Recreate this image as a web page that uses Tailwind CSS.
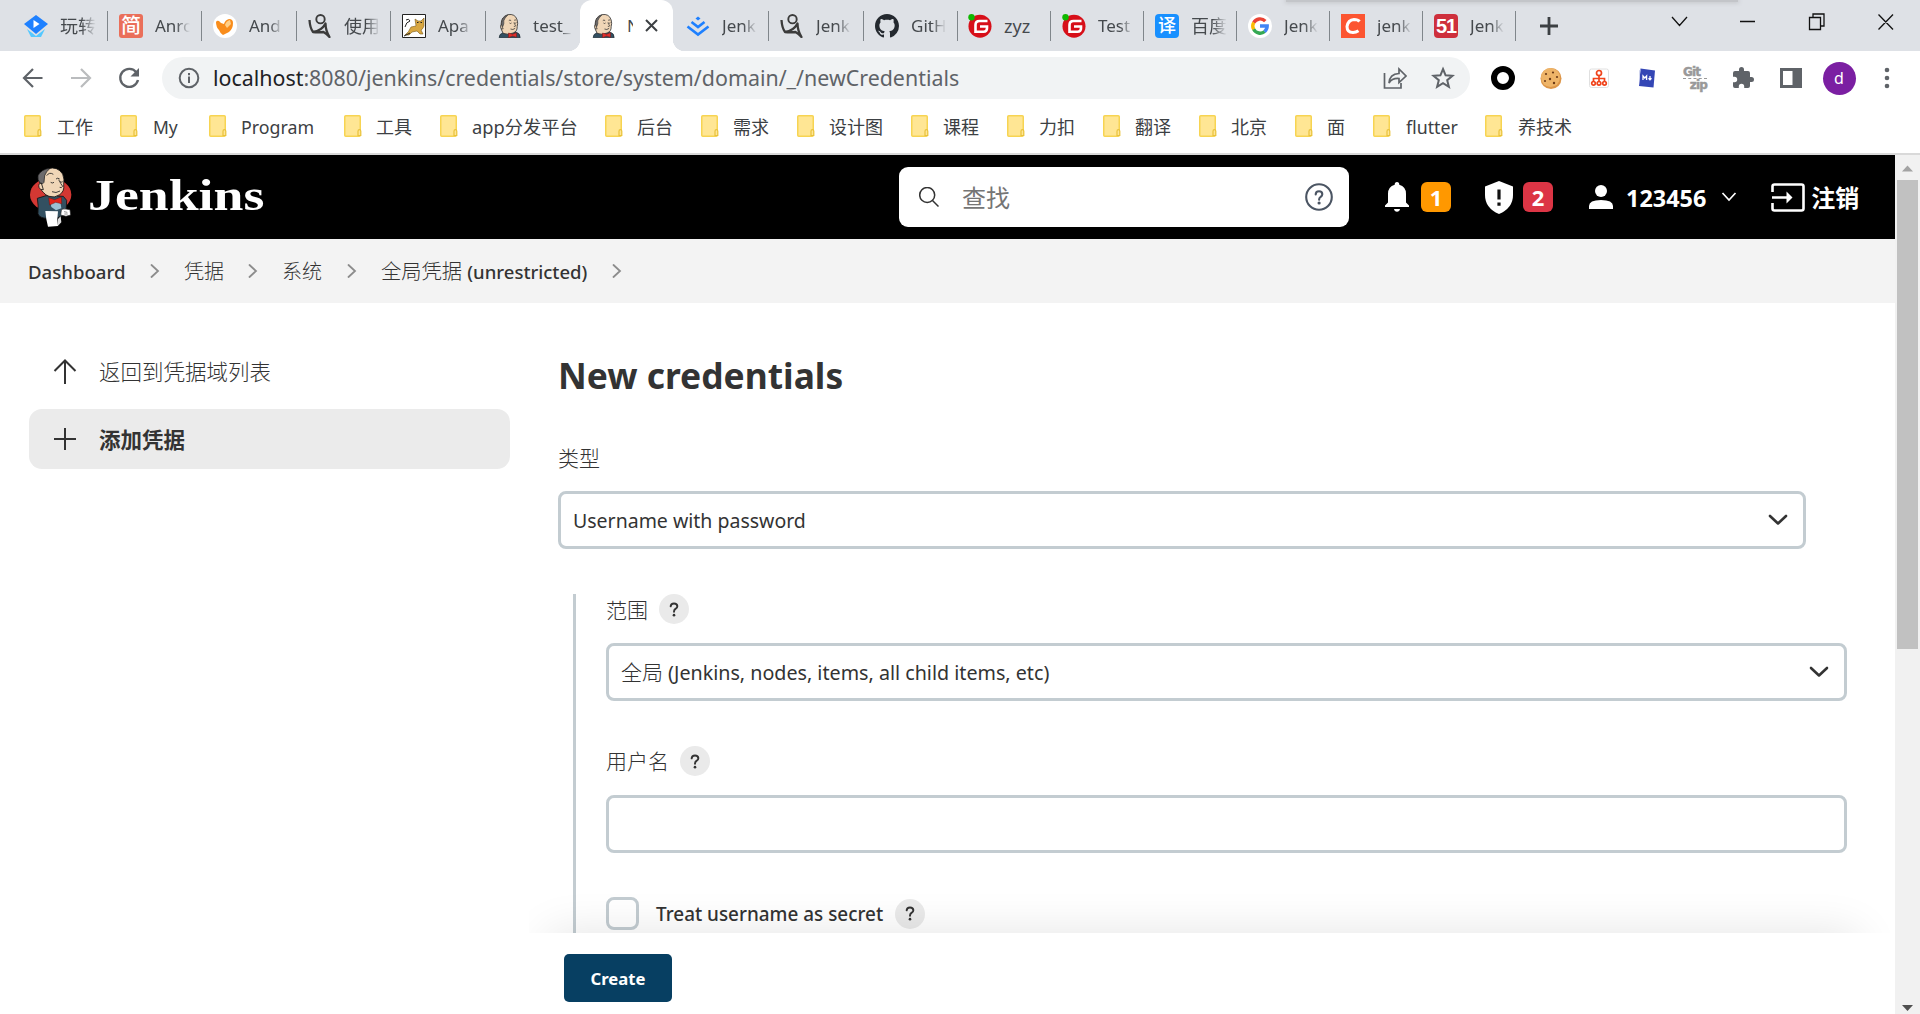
<!DOCTYPE html>
<html lang="zh-CN">
<head>
<meta charset="utf-8">
<title>New credentials [Jenkins]</title>
<script src="https://cdn.jsdelivr.net/npm/@tailwindcss/browser@4"></script>
</head>
<body class="w-[1920px] h-[1014px] overflow-hidden bg-white text-[#333] font-['Noto_Sans','Noto_Sans_CJK_SC',sans-serif]">
<svg class="hidden">
  <defs>
    <symbol id="folder" viewBox="0 0 18 22"><rect x=".75" y=".75" width="15.5" height="20.5" rx="1" fill="#ffe694" stroke="#f7d452" stroke-width="1.5"/><path d="M14 20.5v-4.2q0-1.6 1.4-1.6t1.4 1.6v4.2z" fill="#ffe694" stroke="#e9c23c" stroke-width="1.2"/></symbol>
    <symbol id="butler" viewBox="0 0 66 72"><path d="M2 71q0-11 10-14l18-3 24 1q11 3 11 16z" fill="#335061" stroke="#1c2830" stroke-width="2"/><path d="M14 58Q4 44 8 30 8 8 28 2q22-4 28 16 3 10 0 20 1 14-12 19-16 7-30 1z" fill="#f0d6b7" stroke="#2b2b2b" stroke-width="2.4"/><path d="M9 38Q6 10 28 3l-8 9q-6 8-4 17l-3 9z" fill="#6d6b6d" stroke="#2b2b2b" stroke-width="1.5"/><path d="M9 32q-5 2-2 9 2 5 7 4z" fill="#f0d6b7" stroke="#2b2b2b" stroke-width="2"/><path d="M31 20q3-4 7 0M47 19q3-3 6 0M33 27q3 3 6 0M48 26q3 3 6 0M46 26q3 6 6 9-2 3-6 2M36 45q7 4 14-2" fill="none" stroke="#2b2b2b" stroke-width="2.2"/><path d="M30 57l12 4 12-5v14l-12-4-12 5z" fill="#e0302c" stroke="#7a1714" stroke-width="1.5"/></symbol>
    <symbol id="figure" viewBox="0 0 24 24"><circle cx="12.5" cy="5.2" r="4.2" fill="none" stroke="#3b3b3b" stroke-width="1.9"/><path d="M1.500 6q.5 8 3.500 12 8.500-1 12.500-8.500 0 7 4 13.500-2.500-3-6-5-5.500.5-10.500 0" fill="none" stroke="#3b3b3b" stroke-width="2.300" stroke-linejoin="round"/></symbol>
    <symbol id="gitee" viewBox="0 0 24 24"><circle cx="12" cy="12.200" r="11.500" fill="#d70f19"/><path d="M19.500 7h-8q-4 0-4 4v6.800h8q3.500 0 3.500-3.500v-1.800h-7" fill="none" stroke="#fff" stroke-width="2.600"/><circle cx="3.500" cy="3.200" r="3.200" fill="#0fb800"/></symbol>
    <symbol id="crumb" viewBox="0 0 10 14"><path d="M1.500 1l6.500 6-6.500 6" fill="none" stroke="#8c8c8c" stroke-width="1.800" stroke-linecap="round"/></symbol>
    <symbol id="down" viewBox="0 0 20 12"><path d="M2 2l8 7.500L18 2" fill="none" stroke="#333" stroke-width="2.600" stroke-linecap="round" stroke-linejoin="round"/></symbol>
    <symbol id="help" viewBox="0 0 12 18"><path d="M2 5.200Q2.200 1.700 6 1.700T10 5Q10 7 7.800 8.300 6 9.500 6 11.600" fill="none" stroke="#333" stroke-width="2.300" stroke-linecap="round"/><circle cx="6" cy="15.800" r="1.600" fill="#333"/></symbol>
  </defs>
</svg>

<!-- Tab strip -->
<div class="relative h-[51px] bg-[#dee1e6] flex pl-[13px] text-[17px] text-[#45494d] whitespace-nowrap">
  <div class="w-[95px] flex pl-[11px] pt-[14px] gap-3 relative"><svg class="size-6 shrink-0" viewBox="0 0 24 24"><path d="M3 15l9 7 9-7-4 8H7z" fill="#54c8ff"/><path d="M12 1l12 9-12 10L0 10z" fill="#1e80ff"/><path d="M9.500 6l6 4-6 4z" fill="#fff"/></svg><span class="w-9 overflow-hidden leading-6 text-[18px] [mask-image:linear-gradient(to_right,#000_60%,transparent)]">玩转</span><i class="absolute right-0 top-[11px] h-[30px] w-[1.5px] bg-[#80868b]"></i></div>
  <div class="w-[94px] flex pl-[11px] pt-[14px] gap-3 relative"><span class="size-6 shrink-0 rounded-[3px] bg-[#ea6f5a] text-white text-[20px] leading-[23px] text-center font-medium">简</span><span class="w-[35px] overflow-hidden leading-6 [mask-image:linear-gradient(to_right,#000_60%,transparent)]">Anro</span><i class="absolute right-0 top-[11px] h-[30px] w-[1.5px] bg-[#80868b]"></i></div>
  <div class="w-[95px] flex pl-[11px] pt-[14px] gap-3 relative"><svg class="size-6 shrink-0" viewBox="0 0 24 24"><circle cx="12" cy="12" r="12" fill="#fff"/><path d="M3 8q1-2 3-1 2 3 5 3 1-4 5-5 4 0 4 4 0 6-4 9l-6 3q-3-2-4-5-3-3-3-8z" fill="#f98d1c"/><path d="M12 11q1-4 5-5l1 4-4 4z" fill="#ffd08a"/></svg><span class="w-[34px] overflow-hidden leading-6 [mask-image:linear-gradient(to_right,#000_60%,transparent)]">And</span><i class="absolute right-0 top-[11px] h-[30px] w-[1.5px] bg-[#80868b]"></i></div>
  <div class="w-[94px] flex pl-[11px] pt-[14px] gap-3 relative"><svg class="size-6 shrink-0"><use href="#figure"/></svg><span class="w-9 overflow-hidden leading-6 text-[18px] [mask-image:linear-gradient(to_right,#000_60%,transparent)]">使用</span><i class="absolute right-0 top-[11px] h-[30px] w-[1.5px] bg-[#80868b]"></i></div>
  <div class="w-[95px] flex pl-[11px] pt-[14px] gap-3 relative"><svg class="size-6 shrink-0" viewBox="0 0 24 24"><path d="M.5.5h23v23H.5z" fill="#fff" stroke="#222"/><path d="M3 21q4-3 6-8l5-1-1-7 3 2 3 0 3-3v8q-1 3-3 4l2 4h-3l-3-3-5 1-3 3z" fill="#d9a741" stroke="#7b5a1b" stroke-width=".6"/><path d="M4 6q3-2 4 1-4 1-5 6M15 8.500h1.500M18.500 8.500H20M2 22l6-3" stroke="#222" fill="none"/></svg><span class="w-[34px] overflow-hidden leading-6 [mask-image:linear-gradient(to_right,#000_60%,transparent)]">Apa</span><i class="absolute right-0 top-[11px] h-[30px] w-[1.5px] bg-[#80868b]"></i></div>
  <div class="w-[94px] flex pl-[12px] pt-[14px] gap-3 relative"><svg class="w-[23px] h-6 shrink-0"><use href="#butler"/></svg><span class="w-10 overflow-hidden leading-6 [mask-image:linear-gradient(to_right,#000_70%,transparent)]">test_</span></div>
  <div class="w-[93px] flex pl-[12px] pt-[14px] gap-3 relative bg-white rounded-t-[12px] before:absolute before:bottom-0 before:-left-3 before:size-3 before:bg-[radial-gradient(circle_at_0_0,transparent_12px,#fff_12.500px)] after:absolute after:bottom-0 after:-right-3 after:size-3 after:bg-[radial-gradient(circle_at_100%_0,transparent_12px,#fff_12.500px)]"><svg class="w-[23px] h-6 shrink-0"><use href="#butler"/></svg><span class="w-[6px] overflow-hidden leading-6">N</span><svg class="w-[13px] h-[13px] mt-[5px]" viewBox="0 0 13 13"><path d="M1 1l11 11M12 1L1 12" stroke="#3c4043" stroke-width="2"/></svg></div>
  <div class="w-[96px] flex pl-[13px] pt-[14px] gap-3 relative"><svg class="size-6 shrink-0" viewBox="0 0 24 24"><path d="M12 2.500l2.500 2-2.500 2-2.500-2z" fill="#1e80ff"/><path d="M5.500 8L12 13l6.500-5M1.500 12.500L12 20.500l10.500-8" fill="none" stroke="#1e80ff" stroke-width="2.600"/></svg><span class="w-[35px] overflow-hidden leading-6 [mask-image:linear-gradient(to_right,#000_60%,transparent)]">Jenk</span><i class="absolute right-0 top-[11px] h-[30px] w-[1.5px] bg-[#80868b]"></i></div>
  <div class="w-[95px] flex pl-[11px] pt-[14px] gap-3 relative"><svg class="size-6 shrink-0"><use href="#figure"/></svg><span class="w-[35px] overflow-hidden leading-6 [mask-image:linear-gradient(to_right,#000_60%,transparent)]">Jenk</span><i class="absolute right-0 top-[11px] h-[30px] w-[1.5px] bg-[#80868b]"></i></div>
  <div class="w-[94px] flex pl-[11px] pt-[14px] gap-3 relative"><svg class="size-6 shrink-0" viewBox="0 0 16 16"><path fill="#24292f" d="M8 0C3.580 0 0 3.580 0 8c0 3.540 2.290 6.530 5.470 7.590.4.070.55-.17.55-.38 0-.19-.01-.82-.01-1.490-2.010.37-2.530-.49-2.690-.94-.09-.23-.48-.94-.82-1.130-.28-.15-.68-.52-.01-.53.63-.01 1.080.58 1.230.82.72 1.210 1.870.87 2.330.66.07-.52.28-.87.51-1.070-1.780-.2-3.640-.89-3.640-3.950 0-.87.31-1.590.82-2.150-.08-.2-.36-1.020.08-2.120 0 0 .67-.21 2.200.82.64-.18 1.320-.27 2-.27s1.360.09 2 .27c1.530-1.040 2.200-.82 2.200-.82.44 1.100.16 1.920.08 2.120.51.56.82 1.270.82 2.150 0 3.070-1.870 3.750-3.650 3.950.29.25.54.73.54 1.480 0 1.070-.01 1.930-.01 2.200 0 .21.15.46.55.38A8.010 8.010 0 0016 8c0-4.420-3.580-8-8-8z"/></svg><span class="w-[35px] overflow-hidden leading-6 [mask-image:linear-gradient(to_right,#000_60%,transparent)]">GitH</span><i class="absolute right-0 top-[11px] h-[30px] w-[1.5px] bg-[#80868b]"></i></div>
  <div class="w-[93px] flex pl-[10px] pt-[14px] gap-3 relative"><svg class="size-6 shrink-0"><use href="#gitee"/></svg><span class="w-9 overflow-hidden leading-6 text-[18px]">zyz</span><i class="absolute right-0 top-[11px] h-[30px] w-[1.5px] bg-[#80868b]"></i></div>
  <div class="w-[93px] flex pl-[11px] pt-[14px] gap-3 relative"><svg class="size-6 shrink-0"><use href="#gitee"/></svg><span class="w-9 overflow-hidden leading-6 [mask-image:linear-gradient(to_right,#000_60%,transparent)]">Test</span><i class="absolute right-0 top-[11px] h-[30px] w-[1.5px] bg-[#80868b]"></i></div>
  <div class="w-[93px] flex pl-[11px] pt-[14px] gap-3 relative"><span class="size-6 shrink-0 rounded-[4px] bg-[#1890ff] text-white text-[18px] leading-[23px] text-center font-medium">译</span><span class="w-9 overflow-hidden leading-6 text-[18px] [mask-image:linear-gradient(to_right,#000_60%,transparent)]">百度</span><i class="absolute right-0 top-[11px] h-[30px] w-[1.5px] bg-[#80868b]"></i></div>
  <div class="w-[93px] flex pl-[11px] pt-[14px] gap-3 relative"><svg class="size-6 shrink-0" viewBox="0 0 24 24"><circle cx="12" cy="12" r="12" fill="#fff"/><g fill="none" stroke-width="3.400"><path d="M17.300 7.200A7.200 7.200 0 0 0 5.700 8.700" stroke="#ea4335"/><path d="M5.700 8.500A7.200 7.200 0 0 0 5.700 15.500" stroke="#fbbc05"/><path d="M5.700 15.300A7.200 7.200 0 0 0 16.700 17.500" stroke="#34a853"/><path d="M16.500 17.600A7.200 7.200 0 0 0 19.200 12H12" stroke="#4285f4"/></g></svg><span class="w-[34px] overflow-hidden leading-6 [mask-image:linear-gradient(to_right,#000_60%,transparent)]">Jenk</span><i class="absolute right-0 top-[11px] h-[30px] w-[1.5px] bg-[#80868b]"></i></div>
  <div class="w-[93px] flex pl-[11px] pt-[14px] gap-3 relative"><svg class="size-6 shrink-0" viewBox="0 0 24 24"><path d="M0 0h24v24H0z" fill="#fc5531"/><path d="M18.500 7.500Q17 5.500 13 5.500 7 6 6 12.500 6 18.500 12 18.500q3 0 5.500-1.700" fill="none" stroke="#fff" stroke-width="3"/></svg><span class="w-[35px] overflow-hidden leading-6 [mask-image:linear-gradient(to_right,#000_60%,transparent)]">jenk</span><i class="absolute right-0 top-[11px] h-[30px] w-[1.5px] bg-[#80868b]"></i></div>
  <div class="w-[93px] flex pl-[11px] pt-[14px] gap-3 relative"><span class="size-6 shrink-0 rounded-[4px] bg-[#ce2f3c] text-white text-[20px] leading-6 text-center font-bold tracking-[-1px] font-['Liberation_Sans']">51</span><span class="w-[34px] overflow-hidden leading-6 [mask-image:linear-gradient(to_right,#000_60%,transparent)]">Jenk</span><i class="absolute right-0 top-[11px] h-[30px] w-[1.5px] bg-[#80868b]"></i></div>
  <svg class="w-[18px] h-[18px] ml-[24px] mt-[17px] shrink-0" viewBox="0 0 18 18"><path d="M9 0v18M0 9h18" stroke="#3c4043" stroke-width="2.800"/></svg>
  <div class="absolute left-[1286px] top-0 w-[452px] h-[2px] bg-[#c3c5c9] shadow-[0_0_4px_1px_#c3c5c9]"></div>
  <svg class="absolute left-[1670px] top-[12px] w-[224px] h-5" viewBox="0 0 224 20" fill="none" stroke="#111" stroke-width="1.300"><path d="M2 5l7.500 8.500L17 5M70 9.500h15M139.500 5.500h11v12h-11zM143 5.500v-3.500h11v12h-3.500M208.500 2.500l14.500 15M223 2.500l-14.500 15"/></svg>
</div>

<!-- Address bar -->
<div class="h-[54px] flex items-center pl-[20px] bg-white">
  <svg class="w-[26px] h-6 shrink-0" viewBox="0 0 26 24" fill="none" stroke="#5f6368" stroke-width="2.200"><path d="M22.500 12H4.500M13 3L4 12l9 9"/></svg>
  <svg class="w-[26px] h-6 ml-[22px] shrink-0" viewBox="0 0 26 24" fill="none" stroke="#babcbe" stroke-width="2.200"><path d="M3 12h18.500M13 3l9 9-9 9"/></svg>
  <svg class="w-[26px] h-6 ml-[22px] shrink-0" viewBox="0 0 26 24" fill="none" stroke="#5f6368" stroke-width="2.400"><path d="M20.500 6.500A9 9 0 1 0 22 14"/><path d="M23 2v8.500h-8.500z" fill="#5f6368" stroke="none"/></svg>
  <div class="ml-[20px] w-[1308px] h-[42px] rounded-full bg-[#f1f3f4] flex items-center pl-[16px] pr-[15px]">
    <svg class="size-[22px] shrink-0" viewBox="0 0 22 22"><circle cx="11" cy="11" r="9.300" fill="none" stroke="#5f6368" stroke-width="2"/><path d="M10 9.500h2v6.500h-2zM10 6h2v2.200h-2z" fill="#5f6368"/></svg>
    <span class="ml-[13px] text-[21.400px] leading-[30px] whitespace-nowrap text-[#5f6368]"><span class="text-[#202124]">localhost</span>:8080/jenkins/credentials/store/system/domain/_/newCredentials</span>
    <svg class="ml-auto w-6 h-6 shrink-0" viewBox="0 0 24 24" fill="none" stroke="#5f6368" stroke-width="1.700"><path d="M1.500 7v15h16.500v-5"/><path d="M6 17Q6.500 8 16 7.500V3l7 7-7 6.500V12.500Q9 12 6 17z"/></svg>
    <svg class="ml-[24px] w-6 h-6 shrink-0" viewBox="0 0 24 24" fill="none" stroke="#5f6368" stroke-width="2"><path d="M12 3l2.600 6.300 6.900.5-5.300 4.400 1.700 6.700-5.900-3.700-5.900 3.700 1.700-6.700-5.300-4.400 6.900-.5z"/></svg>
  </div>
  <div class="flex items-center ml-[21px] gap-6">
    <svg class="size-6" viewBox="0 0 24 24"><circle cx="12" cy="12" r="9" fill="none" stroke="#000" stroke-width="6"/></svg>
    <svg class="size-6" viewBox="0 0 24 24"><circle cx="12" cy="12.500" r="10.500" fill="#dd9648"/><circle cx="11.500" cy="11.500" r="9.500" fill="#eeb468"/><g fill="#6b3a17"><circle cx="7" cy="8" r="1.100"/><circle cx="14" cy="6.500" r="1.100"/><circle cx="18" cy="11" r="1.100"/><circle cx="11" cy="13" r="1.200"/><circle cx="6" cy="15" r="1"/><circle cx="15" cy="17" r="1.200"/></g></svg>
    <svg class="size-6" viewBox="0 0 24 24"><rect x="2.500" y="3" width="19" height="18.500" rx="2" fill="#fff" stroke="#e0e0e0"/><g fill="none" stroke="#f0441c" stroke-width="1.700"><circle cx="12" cy="7" r="2.500"/><path d="M12 9.500v6M6.500 15.500v-3h11v3"/><circle cx="6.500" cy="17.300" r="1.800"/><circle cx="12" cy="17.300" r="1.800"/><circle cx="17.500" cy="17.300" r="1.800"/></g></svg>
    <svg class="size-6" viewBox="0 0 24 24"><path d="M5.500 2.500l14.500 2-1.500 17-14.500-1.500z" fill="#3446b5"/><path d="M4 4.500l1.500-1-1.500 16z" fill="#cfd4ee"/><path d="M8 14v-4l1.800 2 1.800-2v4M15 10v3.500M13.500 12.300l1.500 1.500 1.500-1.500" fill="none" stroke="#fff" stroke-width="1.300"/></svg>
    <div class="w-6 h-6 flex flex-col text-[#999] font-bold text-[12px] leading-[12px] font-['DejaVu_Sans'] tracking-[-0.8px] [-webkit-text-stroke:0.5px_#999]"><span>Git</span><span class="text-right border-t border-dashed border-[#999]">zip</span></div>
    <svg class="size-6" viewBox="0 0 24 24"><path d="M20.500 11H19V7a2 2 0 0 0-2-2h-4V3.500a2.500 2.500 0 0 0-5 0V5H4a2 2 0 0 0-2 2v3.800h1.500a2.700 2.700 0 0 1 0 5.400H2V20a2 2 0 0 0 2 2h3.800v-1.500a2.700 2.700 0 0 1 5.400 0V22H17a2 2 0 0 0 2-2v-4h1.500a2.500 2.500 0 0 0 0-5z" fill="#5f6368"/></svg>
    <svg class="size-6" viewBox="0 0 24 24"><path d="M1 2h22v20H1zM4 5v14h9.500V5z" fill="#5f6368" fill-rule="evenodd"/></svg>
    <div class="size-[33px] -mx-[4.500px] rounded-full bg-[#7b1fa2] text-white text-[16px] leading-[32px] text-center">d</div>
    <svg class="size-6" viewBox="0 0 24 24" fill="#5f6368"><circle cx="12" cy="4" r="2.300"/><circle cx="12" cy="12" r="2.300"/><circle cx="12" cy="20" r="2.300"/></svg>
  </div>
</div>

<!-- Bookmarks -->
<div class="h-[50px] border-b-2 border-[#d9d9d9] flex pl-6 pt-[10px] text-[18px] leading-6 text-[#3c4043] whitespace-nowrap">
  <div class="w-24 flex gap-[15px]"><svg class="w-[18px] h-[22px]"><use href="#folder"/></svg><span>工作</span></div>
  <div class="w-[89px] flex gap-[15px]"><svg class="w-[18px] h-[22px]"><use href="#folder"/></svg><span class="text-[17.500px]">My</span></div>
  <div class="w-[135px] flex gap-[14px]"><svg class="w-[18px] h-[22px]"><use href="#folder"/></svg><span class="text-[17.800px]">Program</span></div>
  <div class="w-24 flex gap-[14px]"><svg class="w-[18px] h-[22px]"><use href="#folder"/></svg><span>工具</span></div>
  <div class="w-[165px] flex gap-[14px]"><svg class="w-[18px] h-[22px]"><use href="#folder"/></svg><span class="text-[18.300px]">app分发平台</span></div>
  <div class="w-24 flex gap-[14px]"><svg class="w-[18px] h-[22px]"><use href="#folder"/></svg><span>后台</span></div>
  <div class="w-24 flex gap-[14px]"><svg class="w-[18px] h-[22px]"><use href="#folder"/></svg><span>需求</span></div>
  <div class="w-[114px] flex gap-[14px]"><svg class="w-[18px] h-[22px]"><use href="#folder"/></svg><span>设计图</span></div>
  <div class="w-24 flex gap-[14px]"><svg class="w-[18px] h-[22px]"><use href="#folder"/></svg><span>课程</span></div>
  <div class="w-24 flex gap-[14px]"><svg class="w-[18px] h-[22px]"><use href="#folder"/></svg><span>力扣</span></div>
  <div class="w-24 flex gap-[14px]"><svg class="w-[18px] h-[22px]"><use href="#folder"/></svg><span>翻译</span></div>
  <div class="w-24 flex gap-[14px]"><svg class="w-[18px] h-[22px]"><use href="#folder"/></svg><span>北京</span></div>
  <div class="w-[78px] flex gap-[14px]"><svg class="w-[18px] h-[22px]"><use href="#folder"/></svg><span>面</span></div>
  <div class="w-[112px] flex gap-[15px]"><svg class="w-[18px] h-[22px]"><use href="#folder"/></svg><span class="text-[17.800px]">flutter</span></div>
  <div class="flex gap-[15px]"><svg class="w-[18px] h-[22px]"><use href="#folder"/></svg><span>养技术</span></div>
</div>

<div class="flex h-[859px]">
  <div class="w-[1895px] flex flex-col">
    <!-- Jenkins header -->
    <header class="h-[84px] shrink-0 bg-black flex items-center pl-[29px] text-white">
      <svg class="w-[44px] h-[60px] shrink-0" viewBox="27 20 132 180"><ellipse cx="92" cy="103" rx="62" ry="50" fill="#d33833"/><path d="M52 114l26-8 52 2 10 12-2 40-24 12-30 2q-26 0-30-14 2-24-2-46z" fill="#335061" stroke="#111" stroke-width="2.500"/><path d="M90 118l14 6 16-6 4 26-16 6-14-10z" fill="#9cc0d4"/><path d="M70 96Q58 86 60 66 56 34 84 25q28-8 44 16 6 16 3 32 3 20-12 30-14 11-32 5-10-3-17-12z" fill="#f0d6b7" stroke="#111" stroke-width="2.500"/><path d="M60 68Q52 60 54 46 64 26 90 24 78 34 74 46l-2 20-6 6z" fill="#6d6b6d" stroke="#111" stroke-width="2"/><path d="M64 68q-10 2-7 13 4 10 13 7z" fill="#f0d6b7" stroke="#111" stroke-width="2.500"/><path d="M80 46q8-12 20-4M108 56q5-5 11 0M92 66q5 4 10 0M120 64q4 3 8 0M116 58q6 12 12 20-4 6-9 3M96 94q12 6 24-2" fill="none" stroke="#222" stroke-width="2.500"/><path d="M86 112l18 6 20-8 1 20-18-4-18 8z" fill="#e2231a" stroke="#6d1210" stroke-width="1.500"/><path d="M124 150q2-6 14-4l12 2 2 16-14 4-16-4z" fill="#fff" stroke="#222" stroke-width="2"/><path d="M132 154l10 2M133 161l10 0" stroke="#555" stroke-width="2"/><path d="M76 152l38 1q-4 24 0 44l-30 2q-6-20-8-47z" fill="#fff"/><path d="M114 176l8-8 2 18-10 10z" fill="#ddd"/></svg>
      <span class="ml-[15px] w-[174px] font-['Liberation_Serif'] font-bold text-[45px] leading-[60px] pb-[5px] origin-left scale-x-[1.195]">Jenkins</span>
      <div class="ml-[637px] w-[450px] h-[60px] bg-white rounded-[9px] flex items-center pl-[20px] pr-4 shrink-0">
        <svg class="size-5" viewBox="0 0 20 20" fill="none" stroke="#333" stroke-width="1.500"><circle cx="8.200" cy="8" r="7.500"/><path d="M13.500 13.500l6 6"/></svg>
        <span class="ml-[23px] text-[24px] leading-8 text-[#757575] pt-px">查找</span>
        <svg class="ml-auto size-[28px]" viewBox="0 0 28 28" fill="none" stroke="#4b5563" stroke-width="2.100"><circle cx="14" cy="14" r="12.800"/><path d="M10.700 11.500Q10.700 8.300 14 8.300t3.300 3q0 1.600-1.800 2.700-1.400 1-1.400 2.700" stroke-linecap="round"/><circle cx="14.100" cy="20" r="1.600" fill="#4b5563" stroke="none"/></svg>
      </div>
      <svg class="ml-[36px] w-6 h-[30px]" viewBox="0 0 24 30" fill="#fff"><path d="M12 0q2.300 0 2.300 2.800Q21 4.500 21 12v8.500l3 3V25H0v-1.500l3-3V12Q3 4.500 9.700 2.800 9.700 0 12 0zM9 27h6q-.5 2.800-3 2.800T9 27z"/></svg>
      <span class="ml-3 size-[30px] rounded-[6px] bg-[#ff9800] text-[22px] leading-[31px] text-center font-bold">1</span>
      <svg class="ml-[34px] w-[28px] h-[33px]" viewBox="0 0 28 33"><path d="M14 0l14 5.500V14q0 13-14 19Q0 27 0 14V5.500z" fill="#fff"/><path d="M12.400 8.500h3.200v10h-3.200zM12.400 21.500h3.200v3.300h-3.200z" fill="#111"/></svg>
      <span class="ml-[10px] size-[30px] rounded-[6px] bg-[#dc3545] text-[22px] leading-[31px] text-center font-bold">2</span>
      <svg class="ml-[36px] w-6 h-6" viewBox="0 0 24 24" fill="#fff"><circle cx="12" cy="6" r="6"/><path d="M0 24v-3q0-6 12-6t12 6v3z"/></svg>
      <span class="ml-[13px] text-[23.400px] leading-8 font-bold pt-px">123456</span>
      <svg class="ml-[15px] w-4 h-[10px] shrink-0" viewBox="0 0 16 10"><path d="M1.500 1l6.500 7 6.500-7" fill="none" stroke="#fff" stroke-width="1.700"/></svg>
      <svg class="ml-[34px] w-[34px] h-[29px] shrink-0" viewBox="0 0 34 29" fill="none" stroke="#fff" stroke-width="2.600"><path d="M1.500 9V3.500q0-2 2-2h27q2 0 2 2v22q0 2-2 2h-27q-2 0-2-2V20M1 14.500h17"/><path d="M15.500 8.500l6 6-6 6z" fill="#fff" stroke="none"/></svg>
      <span class="ml-[6px] text-[24px] leading-8 font-bold whitespace-nowrap pt-px">注销</span>
    </header>

    <!-- Breadcrumbs -->
    <nav class="h-16 shrink-0 bg-[#f3f3f3] flex items-center pl-7 text-[20px] leading-7 whitespace-nowrap">
      <span class="w-[122px] text-[18.600px] font-medium pt-px">Dashboard</span>
      <svg class="w-[10px] h-[14px] mr-6"><use href="#crumb"/></svg>
      <span class="w-[64px] font-light pt-[2px]">凭据</span>
      <svg class="w-[10px] h-[14px] mr-6"><use href="#crumb"/></svg>
      <span class="w-[65px] font-light pt-[2px]">系统</span>
      <svg class="w-[10px] h-[14px] mr-6"><use href="#crumb"/></svg>
      <span class="w-[231px] pt-px"><span class="font-light text-[20.300px]">全局凭据</span> <span class="text-[18.500px] font-medium">(unrestricted)</span></span>
      <svg class="w-[10px] h-[14px]"><use href="#crumb"/></svg>
    </nav>

    <div class="flex grow min-h-0">
      <!-- Side tasks -->
      <aside class="w-[529px] shrink-0 pl-[29px] pt-[39px]">
        <div class="w-[481px] h-[60px] mb-[7px] flex items-center pl-[24px] text-[21.500px]"><svg class="w-6 h-7 mr-[22px]" viewBox="0 0 24 28" fill="none" stroke="#333" stroke-width="2"><path d="M12 26V3M1.500 13L12 2.500 22.500 13"/></svg><span class="font-light pt-px">返回到凭据域列表</span></div>
        <div class="w-[481px] h-[60px] rounded-[13px] bg-[#ebebeb] flex items-center pl-[24px] text-[21.500px]"><svg class="w-6 h-6 mr-[22px]" viewBox="0 0 24 24" fill="none" stroke="#333" stroke-width="2"><path d="M12 1v22M1 12h22"/></svg><span class="font-bold pt-[3px]">添加凭据</span></div>
      </aside>

      <!-- Form -->
      <main class="grow relative pl-[29px] overflow-hidden">
        <h1 class="mt-[47px] text-[35.400px] leading-[50px] font-bold">New credentials</h1>
        <div class="mt-[43px] text-[21px] leading-[30px] font-light">类型</div>
        <div class="mt-[18px] w-[1248px] h-[58px] rounded-[8px] border-[3px] border-[#c3ccd1] flex items-center justify-between pl-3 pr-[15px] text-[19.500px]"><span class="pt-[2px]">Username with password</span><svg class="w-5 h-3"><use href="#down"/></svg></div>
        <div class="mt-[45px] ml-[15px] w-[1274px] h-[360px] border-l-[3px] border-[#c3ccd1] pl-[30px]">
          <div class="flex items-center h-[30px] text-[21px] font-light"><span class="pt-[3px]">范围</span><span class="ml-[11px] size-[30px] rounded-full bg-[#eaeaea] flex items-center justify-center"><svg class="w-[10px] h-[15px]"><use href="#help"/></svg></span></div>
          <div class="mt-[19px] h-[58px] rounded-[8px] border-[3px] border-[#c3ccd1] flex items-center justify-between pl-3 pr-[15px] text-[19.700px]"><span class="pt-[2px]"><span class="font-light text-[21px]">全局</span> (Jenkins, nodes, items, all child items, etc)</span><svg class="w-5 h-3"><use href="#down"/></svg></div>
          <div class="mt-[45px] flex items-center h-[30px] text-[21px] font-light"><span class="pt-[2px]">用户名</span><span class="ml-[11px] size-[30px] rounded-full bg-[#eaeaea] flex items-center justify-center"><svg class="w-[10px] h-[15px]"><use href="#help"/></svg></span></div>
          <div class="mt-[19px] h-[58px] rounded-[8px] border-[3px] border-[#c3ccd1]"></div>
          <div class="mt-[44px] flex items-center"><span class="size-[33px] rounded-[8px] border-[3px] border-[#c3ccd1] bg-white"></span><span class="ml-[17px] text-[18.900px] font-medium pt-[2px]">Treat username as secret</span><span class="ml-[12px] size-[30px] rounded-full bg-[#eaeaea] flex items-center justify-center"><svg class="w-[10px] h-[15px]"><use href="#help"/></svg></span></div>
        </div>
        <!-- Sticky action bar -->
        <div class="absolute left-0 right-0 bottom-0 h-[145px] overflow-hidden">
          <div class="mt-16 ml-[29px] mr-[47px] h-[81px] relative">
            <div class="absolute -inset-x-[10px] top-0 h-[81px] shadow-[0_0_46px_rgba(0,0,0,.11)]"></div>
            <div class="absolute -left-[60px] -right-[60px] inset-y-0 bg-white"></div>
            <button class="absolute left-[6px] top-[21px] w-[108px] h-12 rounded-[5px] bg-[#073f62] text-white text-[16.700px] font-bold pt-px">Create</button>
          </div>
        </div>
      </main>
    </div>
  </div>

  <!-- Scrollbar -->
  <div class="w-[25px] bg-[#f1f1f1] flex flex-col items-center">
    <svg class="w-[11px] h-[25px] shrink-0" viewBox="0 0 11 25"><path d="M0 16.500L5.500 10.500l5.500 6z" fill="#a3a3a3"/></svg>
    <div class="w-[21px] h-[469px] bg-[#c1c1c1]"></div>
    <svg class="w-[11px] h-[6px] mt-auto mb-[3px] shrink-0" viewBox="0 0 11 6"><path d="M0 0h11L5.500 6z" fill="#505050"/></svg>
  </div>
</div>
</body>
</html>
